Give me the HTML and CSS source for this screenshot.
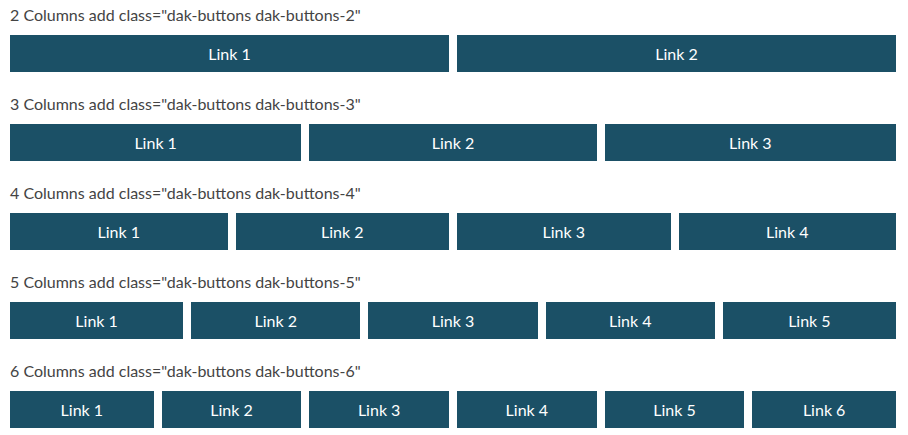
FILE: index.html
```html
<!DOCTYPE html>
<html lang="en">

<head>
    <meta charset="UTF-8">
    <meta name="viewport" content="width=device-width, initial-scale=1.0">
    <title>DAK Buttons</title>
    <link rel="stylesheet" href="styles.css">
</head>

<body>
    <div class="demo">
        <p class="demo-title">2 Columns add class="dak-buttons dak-buttons-2"</p>
        <div class="dak-buttons dak-buttons-2">
            <a href="#">Link 1</a>
            <a href="#">Link 2</a>
        </div>
    </div>

    <div class="demo">
        <p class="demo-title">3 Columns add class="dak-buttons dak-buttons-3"</p>
        <div class="dak-buttons dak-buttons-3">
            <a href="#">Link 1</a>
            <a href="#">Link 2</a>
            <a href="#">Link 3</a>
        </div>
    </div>

    <div class="demo">
        <p class="demo-title">4 Columns add class="dak-buttons dak-buttons-4"</p>
        <div class="dak-buttons dak-buttons-4">
            <a href="#">Link 1</a>
            <a href="#">Link 2</a>
            <a href="#">Link 3</a>
            <a href="#">Link 4</a>
        </div>
    </div>

    <div class="demo">
        <p class="demo-title">5 Columns add class="dak-buttons dak-buttons-5"</p>
        <div class="dak-buttons dak-buttons-5">
            <a href="#">Link 1</a>
            <a href="#">Link 2</a>
            <a href="#">Link 3</a>
            <a href="#">Link 4</a>
            <a href="#">Link 5</a>
        </div>
    </div>

    <div class="demo">
        <p class="demo-title">6 Columns add class="dak-buttons dak-buttons-6"</p>
        <div class="dak-buttons dak-buttons-6">
            <a href="#">Link 1</a>
            <a href="#">Link 2</a>
            <a href="#">Link 3</a>
            <a href="#">Link 4</a>
            <a href="#">Link 5</a>
            <a href="#">Link 6</a>
        </div>
    </div>
</body>

</html>
```

FILE: styles.css
```css
body {
    margin: 0;
    padding: 4px 12px 0 10px;
    background-color: #fff;
    font-family: Lato, "Liberation Sans", sans-serif;
    font-size: 16px;
    color: #444;
}

/* 每組示範 */
.demo {
    margin-bottom: 21px;
}

.demo-title {
    margin: 0 0 9px;
    line-height: 22px;
}

/* 按鈕列：每格等寬 */
.dak-buttons {
    display: grid;
    grid-auto-flow: column;
    grid-auto-columns: 1fr;
}

/* 左右各留 4px，頭尾貼邊 */
.dak-buttons a {
    min-width: 0;
    padding: 0 4px;
    color: #fff;
    text-decoration: none;
    background-color: #1b5066;
    background-clip: content-box;
    line-height: 37px;
    text-align: center;
}

.dak-buttons a:first-child {
    padding-left: 0;
}

.dak-buttons a:last-child {
    padding-right: 0;
}
```
